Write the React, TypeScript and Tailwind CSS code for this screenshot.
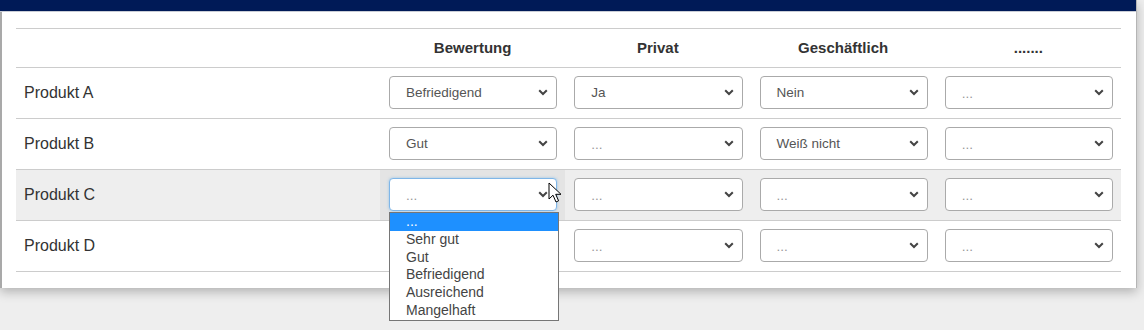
import React from "react"

type Row = { name: string; values: string[]; active?: boolean; covered?: boolean }

const rows: Row[] = [
  { name: "Produkt A", values: ["Befriedigend", "Ja", "Nein", "..."] },
  { name: "Produkt B", values: ["Gut", "...", "Weiß nicht", "..."] },
  { name: "Produkt C", values: ["...", "...", "...", "..."], active: true },
  { name: "Produkt D", values: ["...", "...", "...", "..."], covered: true },
]

const headers = ["Bewertung", "Privat", "Geschäftlich", "......."]

const options = ["...", "Sehr gut", "Gut", "Befriedigend", "Ausreichend", "Mangelhaft"]

function Chevron() {
  return (
    <svg width="10" height="7" viewBox="0 0 10 7" className="shrink-0">
      <path d="M1.2 1.2 L5 5 L8.8 1.2" fill="none" stroke="#444" strokeWidth="2" />
    </svg>
  )
}

function Cursor() {
  return (
    <svg width="16" height="22" viewBox="0 0 16 22" className="absolute left-[548px] top-[182px] z-20">
      <path
        d="M1 1 L1 17 L5 13.2 L8 20 L10.6 18.8 L7.7 12.3 L13 12.3 Z"
        fill="#fff"
        stroke="#000"
        strokeWidth="1"
        strokeLinejoin="round"
      />
    </svg>
  )
}

function FakeSelect({ value, focused, hidden }: { value: string; focused?: boolean; hidden?: boolean }) {
  const empty = value === "..."
  return (
    <div
      className={`relative flex h-[33px] items-center justify-between rounded-[4px] border bg-white pl-[16px] pr-[8px] ${
        focused ? "border-[#7fb6e8] shadow-[0_0_3px_rgba(102,175,233,0.6)]" : "border-[#aaaaaa]"
      } ${hidden ? "invisible" : ""}`}
    >
      <span className={`text-[13.5px] ${empty ? "text-[#999] pt-[3px]" : "text-[#555] pt-[2px]"}`}>{value}</span>
      <Chevron />
      {focused && (
        <div className="visible absolute left-[-1px] top-[33px] z-10 w-[170px] border border-[#767676] bg-white">
          {options.map((o, i) => (
            <div
              key={o}
              className={`h-[17.8px] overflow-hidden pl-[16px] text-[14px] leading-[17.8px] ${
                i === 0 ? "bg-[#1e90ff] text-white" : "text-[#444]"
              }`}
            >
              {o}
            </div>
          ))}
        </div>
      )}
    </div>
  )
}

export default function App() {
  return (
    <div className="relative h-[330px] w-[1144px] overflow-hidden bg-[#eeeeee] font-['Liberation_Sans',Arial,sans-serif]">
      <div className="w-[1137px] border-r border-[#b5b5b5] bg-white shadow-[0_4px_10px_rgba(0,0,0,0.25)]">
        <div className="h-[11px] bg-[#001a57]" />
        <div className="h-[1px] bg-[#c9cdd6]" />
        <div className="border-l-[2px] border-[#a9a9a9] px-[14px] pb-[16px] pt-[16px]">
          <div className="mr-[1px] border-t border-[#cccccc]">
            <div className="grid h-[39px] grid-cols-[364px_1fr_1fr_1fr_1fr] border-b border-[#cccccc]">
              <div />
              {headers.map((h) => (
                <div key={h} className="flex items-center justify-center text-[15px] font-bold text-[#333]">
                  {h}
                </div>
              ))}
            </div>
            {rows.map((r) => (
              <div
                key={r.name}
                className={`relative grid h-[51px] grid-cols-[364px_1fr_1fr_1fr_1fr] border-b border-[#cccccc] ${
                  r.active ? "z-10 bg-[#eeeeee]" : ""
                }`}
              >
                <div className="flex items-center pl-[8px] text-[16px] text-[#333]">{r.name}</div>
                {r.values.map((v, i) => (
                  <div
                    key={i}
                    className={`pl-[9px] pr-[8px] pt-[8px] ${r.active && i === 0 ? "bg-[#e4e4e4]" : ""}`}
                  >
                    <FakeSelect value={v} focused={r.active && i === 0} hidden={r.covered && i === 0} />
                  </div>
                ))}
              </div>
            ))}
          </div>
        </div>
      </div>
      <Cursor />
    </div>
  )
}
